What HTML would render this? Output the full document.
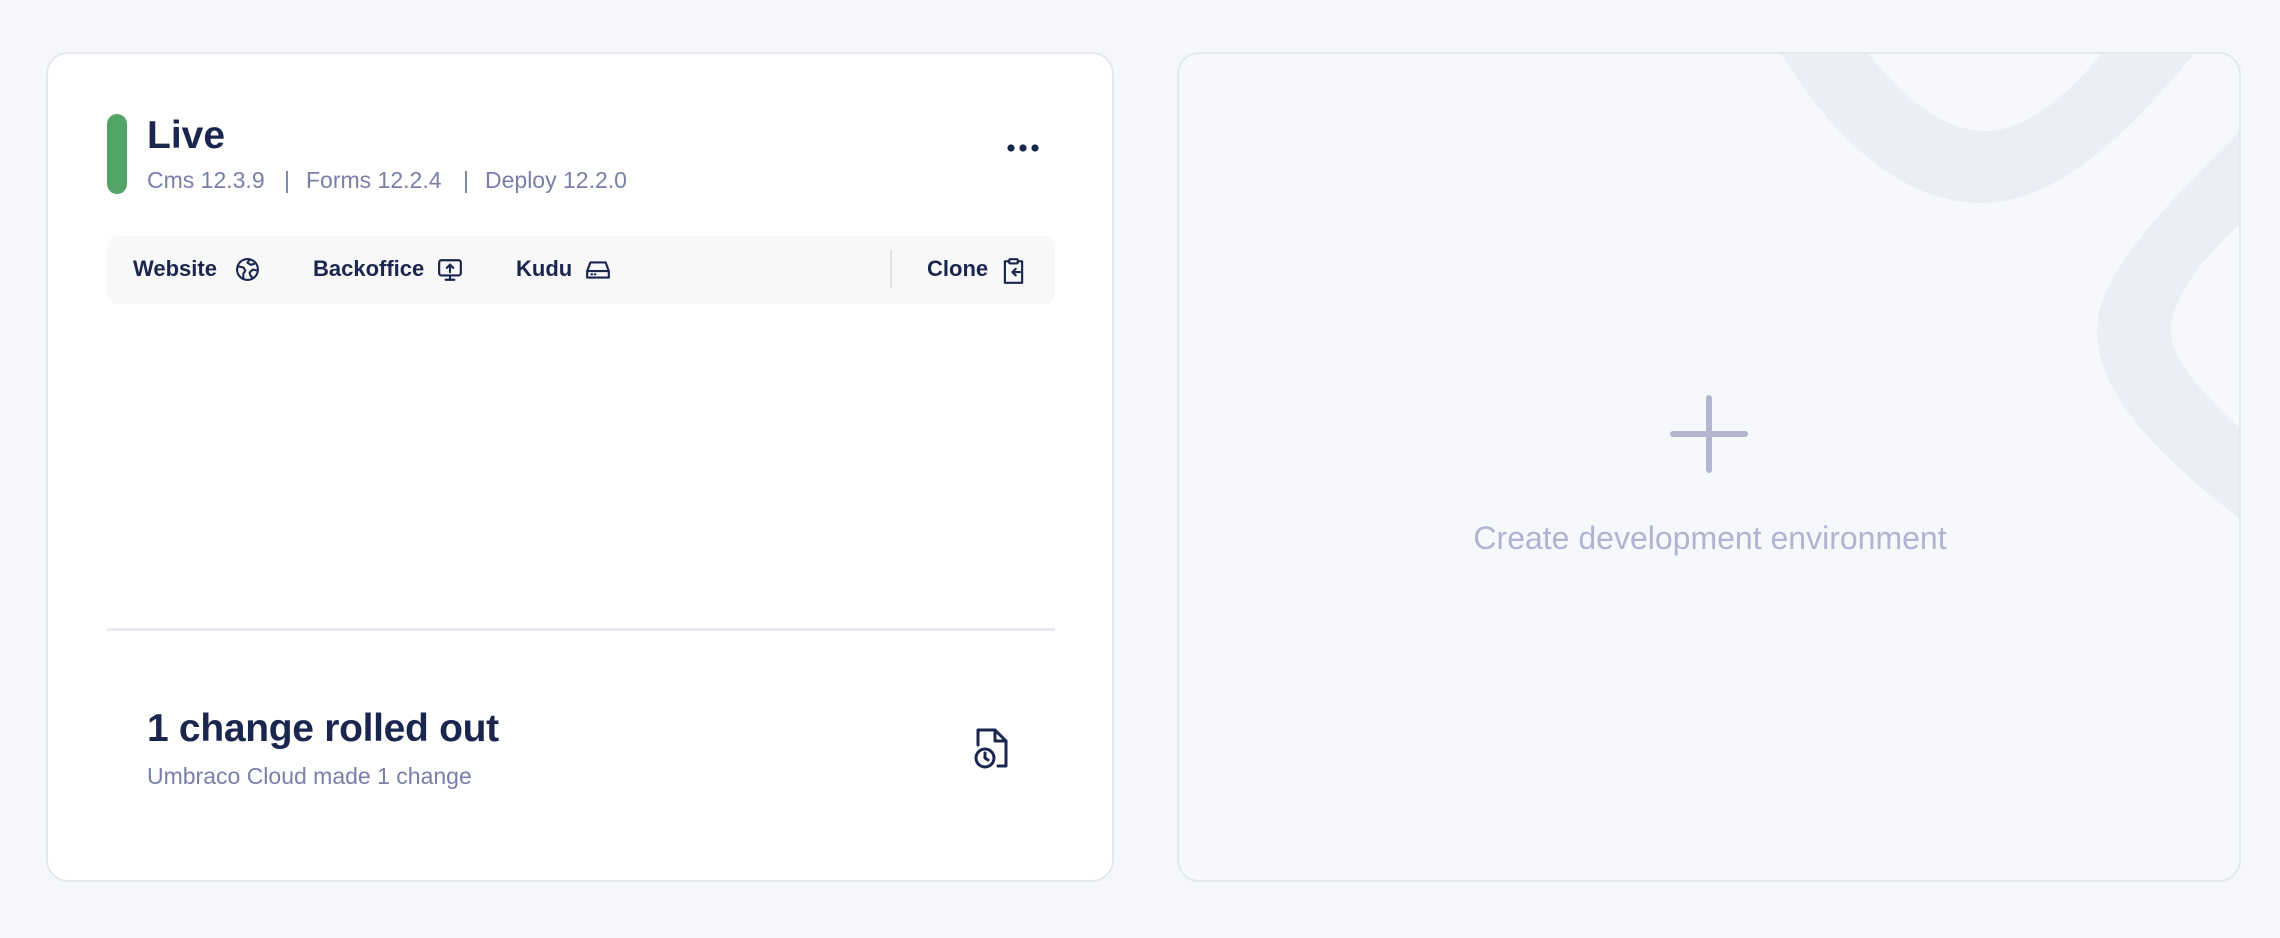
<!DOCTYPE html>
<html><head><meta charset="utf-8"><style>
*{margin:0;padding:0;box-sizing:border-box}
html,body{width:2280px;height:938px;background:#f6f7fb;font-family:"Liberation Sans",sans-serif;overflow:hidden;position:relative}
.card{position:absolute;border:2px solid #e6e8f0;border-radius:22px}
#l{left:46px;top:52px;width:1068px;height:830px;background:#fff}
#r{left:1177px;top:52px;width:1064px;height:830px;background:#f7f8fc;overflow:hidden}
.abs{position:absolute}
.bar{left:59px;top:60px;width:20px;height:80px;border-radius:10px;background:#52a567}
.live{left:99px;top:60px;font-size:39px;font-weight:bold;color:#1b264f}
.ver{top:113px;font-size:23px;color:#7a7fa8;white-space:pre}
.dots{left:958px;top:88px}
.tb{left:59px;top:182px;width:948px;height:68px;background:#f8f8f9;border-radius:12px}
.tb span{position:absolute;top:20px;font-size:22px;font-weight:bold;color:#1b264f}
.tb svg{position:absolute;top:21px}
.vdiv{position:absolute;left:783px;top:14px;width:2px;height:38px;background:#e2e3ea}
.hr{left:59px;top:574px;width:948px;height:3px;background:#e8eaf2}
.t2{left:99px;top:653px;font-size:39px;font-weight:bold;color:#1b264f;letter-spacing:-0.3px}
.s2{left:99px;top:709px;font-size:23px;color:#7a7fa8}
.ct{left:0;width:1062px;text-align:center;top:466px;font-size:32px;color:#b1b4d0}
</style></head><body>
<div class="card" id="l">
  <div class="abs bar"></div>
  <div class="abs live">Live</div>
  <div class="abs ver" style="left:99px">Cms 12.3.9</div>
  <div class="abs ver" style="left:236px">|</div>
  <div class="abs ver" style="left:258px">Forms 12.2.4</div>
  <div class="abs ver" style="left:415px">|</div>
  <div class="abs ver" style="left:437px">Deploy 12.2.0</div>
  <svg class="abs dots" width="36" height="12" viewBox="0 0 36 12"><circle cx="5" cy="6" r="3.6" fill="#1b264f"/><circle cx="17" cy="6" r="3.6" fill="#1b264f"/><circle cx="29" cy="6" r="3.6" fill="#1b264f"/></svg>
  <div class="abs tb">
    <span style="left:26px">Website</span>
    <svg style="left:128px" width="25" height="25" viewBox="0 0 24 24" fill="none" stroke="#1b264f" stroke-width="2" stroke-linejoin="round"><circle cx="12" cy="12" r="10"/><path d="M3 9l5 1 2 3-2 3v5M14 2.5l-2 3 3 2 4-1M21 13l-4-1-3 3 1 3 2 2"/></svg>
    <span style="left:206px">Backoffice</span>
    <svg style="left:330px" width="26" height="26" viewBox="0 0 24 24" fill="none" stroke="#1b264f" stroke-width="2" stroke-linecap="round" stroke-linejoin="round"><rect x="2" y="3" width="20" height="14" rx="2"/><path d="M12 7v7M9 10l3-3 3 3M12 17v4M8 21h8"/></svg>
    <span style="left:409px">Kudu</span>
    <svg style="left:478px" width="26" height="26" viewBox="0 0 24 24" fill="none" stroke="#1b264f" stroke-width="2" stroke-linejoin="round"><path d="M2 13l3-8h14l3 8v6H2z M2 13h20"/><path d="M6 16h.5M9 16h.5" stroke-linecap="round"/></svg>
    <div class="vdiv"></div>
    <span style="left:820px">Clone</span>
    <svg style="left:894px" width="25" height="28" viewBox="0 0 22 26" fill="none" stroke="#1b264f" stroke-width="2" stroke-linecap="round" stroke-linejoin="round"><path d="M7 4H3v20h16V4h-4"/><rect x="7" y="2" width="8" height="4" rx="1"/><path d="M17 14h-7M13 11l-3 3 3 3"/></svg>
  </div>
  <div class="abs hr"></div>
  <div class="abs t2">1 change rolled out</div>
  <div class="abs s2">Umbraco Cloud made 1 change</div>
  <svg class="abs" style="left:924px;top:673px" width="38" height="42" viewBox="0 0 38 42" fill="none" stroke="#1b264f" stroke-width="3" stroke-linecap="round" stroke-linejoin="round"><path d="M6 18V3h17l11 11v25h-8"/><path d="M23 3v11h11"/><circle cx="13" cy="31" r="9"/><path d="M13 26v5l3 2"/></svg>
</div>
<div class="card" id="r">
  <svg class="abs" style="left:-2px;top:-2px" width="1066" height="832" viewBox="1177 52 1066 832">
    <path d="M1780 52 C1840 150 1910 203 1981 203 C2060 203 2130 130 2196 52 L2103 52 C2060 105 2020 131 1985 131 C1945 131 1905 100 1867 52 Z" fill="#eceef6"/>
    <path d="M2243 128 C2150 220 2097 280 2097 330 C2097 390 2150 450 2243 521 L2243 432 C2200 390 2171 360 2171 330 C2171 300 2200 260 2243 221 Z" fill="#eceef6"/>
  </svg>
  <svg class="abs" style="left:491px;top:341px" width="78" height="78" viewBox="0 0 78 78" stroke="#b3b5d1" stroke-width="6" stroke-linecap="round"><path d="M39 3v72M3 39h72"/></svg>
  <div class="abs ct">Create development environment</div>
</div>
</body></html>
